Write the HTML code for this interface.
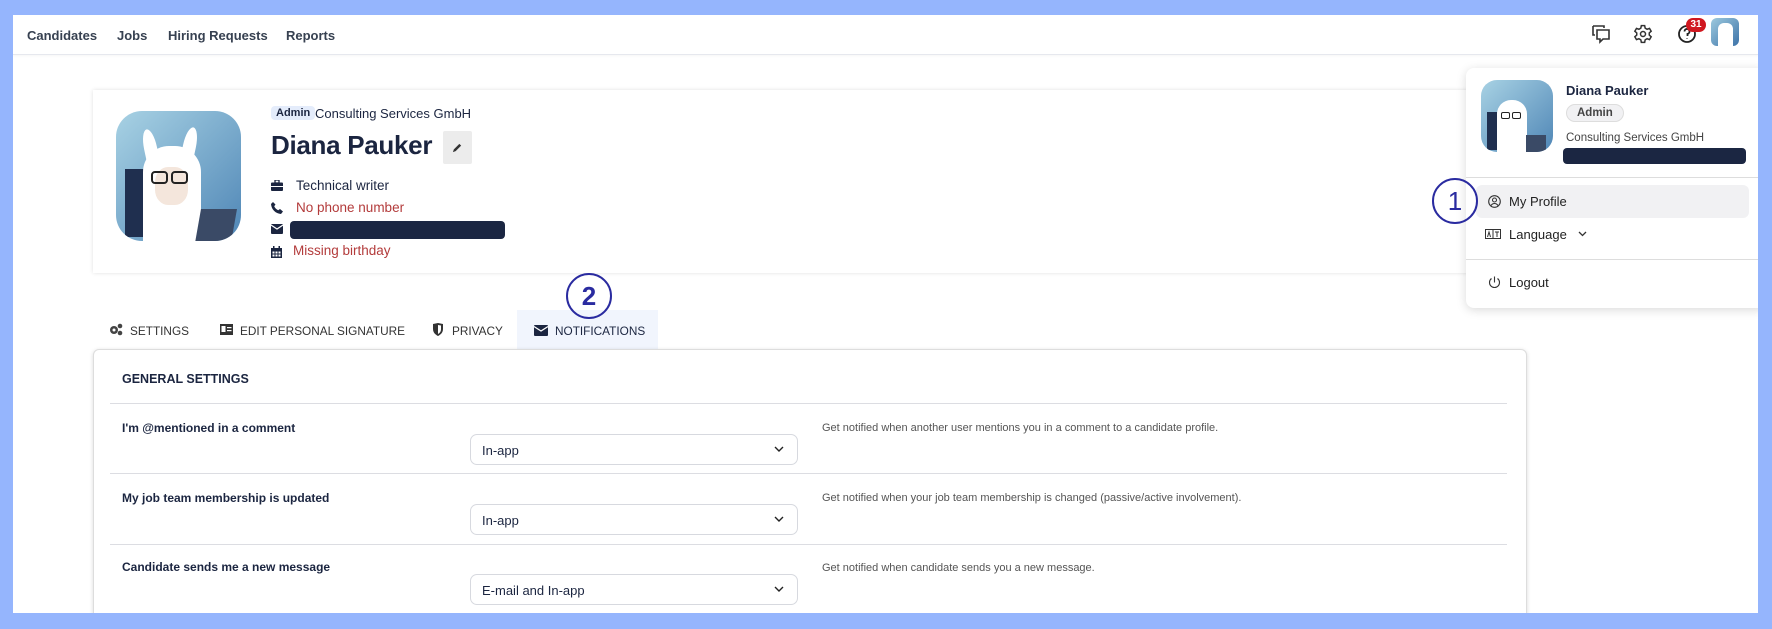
<!DOCTYPE html>
<html><head><meta charset="utf-8"><style>
*{box-sizing:border-box;margin:0;padding:0}
body{width:1772px;height:629px;background:#95b5fd;font-family:"Liberation Sans",sans-serif;position:relative;overflow:hidden;color:#1b2540}
.abs{position:absolute}
#page{position:absolute;left:13px;top:15px;width:1745px;height:598px;background:#fff;overflow:hidden}
.nav{position:absolute;left:0;top:0;width:100%;height:40px;border-bottom:1px solid #e6e8ee;box-shadow:0 1px 2px rgba(0,0,0,.04)}
.nav span{position:absolute;top:13px;font-size:13px;font-weight:bold;color:#374151}
.card{position:absolute;background:#fff;box-shadow:0 0 4px rgba(0,0,0,.12)}
.t{position:absolute;white-space:nowrap}
.row{position:absolute;font-size:13.5px}
.sel{position:absolute;left:457px;width:328px;height:31px;border:1px solid #d7d9df;border-radius:7px;font-size:13px;padding:8px 0 0 11px;color:#1b2540}
.sel svg{position:absolute;right:13px;top:11px}
.div{position:absolute;left:97px;width:1397px;height:1px;background:#dcdde2}
.lbl{position:absolute;left:109px;font-size:12px;font-weight:bold}
.desc{position:absolute;left:809px;font-size:11px;color:#555}
.circ{position:absolute;width:46px;height:46px;border:2px solid #2a2ba0;border-radius:50%;color:#2a2ba0;font-size:26px;text-align:center;line-height:42px;font-weight:bold}
.tab{position:absolute;top:309px;font-size:11.8px;color:#333;white-space:nowrap}
</style></head><body>
<div id="page">
<div class="nav">
<span style="left:14px">Candidates</span><span style="left:104px">Jobs</span><span style="left:155px">Hiring Requests</span><span style="left:273px">Reports</span>
<svg class="abs" style="left:1578px;top:9px" width="20" height="20" viewBox="0 0 20 20" fill="none" stroke="#333" stroke-width="1.6"><path d="M2 2h11v2M2 2v9h2"/><path d="M6 6h12v9h-6l-3 3v-3H6z"/></svg>
<svg class="abs" style="left:1620px;top:9px" width="20" height="20" viewBox="0 0 24 24" fill="none" stroke="#333" stroke-width="1.8"><circle cx="12" cy="12" r="3"/><path d="M10 2h4l.6 3 2.3 1.3 2.9-1 2 3.4-2.3 2v2.6l2.3 2-2 3.4-2.9-1-2.3 1.3L14 22h-4l-.6-3-2.3-1.3-2.9 1-2-3.4 2.3-2v-2.6l-2.3-2 2-3.4 2.9 1L9.4 5z"/></svg>
<svg class="abs" style="left:1664px;top:9px" width="20" height="20" viewBox="0 0 20 20" fill="none" stroke="#222" stroke-width="1.8"><circle cx="10" cy="10" r="8"/><path d="M7.5 7.5a2.5 2.5 0 1 1 3 2.4V12M10 14.5v.5"/></svg>
<div class="abs" style="left:1673px;top:3px;width:20px;height:14px;border-radius:7px;background:#d0171f;color:#fff;font-size:10px;font-weight:bold;text-align:center;line-height:14px">31</div>
<div class="abs" style="left:1698px;top:3px;width:28px;height:28px;border-radius:6px;background:linear-gradient(135deg,#9cc9de,#3d73a8);overflow:hidden"><div class="abs" style="left:7px;top:5px;width:15px;height:23px;background:#fff;border-radius:6px 6px 0 0"></div></div>
</div>

<div class="card" style="left:80px;top:75px;width:1380px;height:183px">
<div class="abs" style="left:23px;top:21px;width:125px;height:130px;border-radius:26px;background:linear-gradient(135deg,#a8d2e4,#4f86b6);overflow:hidden">
<div class="abs" style="left:9px;top:58px;width:20px;height:68px;background:#1f2f4f"></div>
<div class="abs" style="left:28px;top:18px;width:13px;height:38px;background:#fff;border-radius:50% 50% 0 0;transform:rotate(-12deg)"></div>
<div class="abs" style="left:67px;top:16px;width:13px;height:38px;background:#fff;border-radius:50% 50% 0 0;transform:rotate(12deg)"></div>
<div class="abs" style="left:27px;top:35px;width:58px;height:100px;background:#fff;border-radius:26px 26px 0 0"></div>
<div class="abs" style="left:39px;top:56px;width:33px;height:38px;background:#f4e6dc;border-radius:40%"></div>
<div class="abs" style="left:35px;top:60px;width:17px;height:13px;border:2px solid #222;border-radius:4px"></div>
<div class="abs" style="left:55px;top:60px;width:17px;height:13px;border:2px solid #222;border-radius:4px"></div>
<div class="abs" style="left:82px;top:98px;width:36px;height:34px;background:#3a4a66;transform:skewX(-10deg)"></div>
</div>
<div class="t" style="left:178px;top:16px;background:#e4ecfb;border-radius:4px;padding:1px 5px;font-size:11px;font-weight:bold">Admin</div>
<div class="t" style="left:222px;top:16px;font-size:13px">Consulting Services GmbH</div>
<div class="t" style="left:178px;top:40px;font-size:26px;font-weight:bold;letter-spacing:-.3px">Diana Pauker</div>
<div class="abs" style="left:350px;top:41px;width:29px;height:33px;background:#ececec;border-radius:2px"><svg class="abs" style="left:9px;top:11px" width="11" height="11" viewBox="0 0 12 12"><path d="M1 11l1-3 6-6 2 2-6 6z" fill="#333"/></svg></div>
<svg class="abs" style="left:178px;top:90px" width="12" height="11" viewBox="0 0 12 11"><rect x="0" y="2.5" width="12" height="8.5" rx="1" fill="#1b2540"/><rect x="4" y="0" width="4" height="3" fill="none" stroke="#1b2540" stroke-width="1.3"/><rect x="0" y="6" width="12" height="1" fill="#fff"/></svg>
<div class="row t" style="left:203px;top:88px">Technical writer</div>
<svg class="abs" style="left:178px;top:112px" width="12" height="12" viewBox="0 0 12 12"><path d="M2 0l2.5 2.5-1.3 1.8c.8 1.8 2.2 3.2 4 4l1.8-1.3L12 9.5 10 12C4.5 11.5.5 7.5 0 2z" fill="#1b2540"/></svg>
<div class="row t" style="left:203px;top:110px;color:#b33b3b">No phone number</div>
<svg class="abs" style="left:178px;top:134px" width="12" height="10" viewBox="0 0 12 10"><rect width="12" height="10" rx="1" fill="#1b2540"/><path d="M0 1l6 4 6-4" stroke="#fff" stroke-width="1.2" fill="none"/></svg>
<div class="abs" style="left:197px;top:131px;width:215px;height:18px;border-radius:4px;background:#1b2642"></div>
<svg class="abs" style="left:178px;top:156px" width="11" height="12" viewBox="0 0 11 12"><rect y="2" width="11" height="10" fill="#1b2540"/><rect x="2" y="0" width="1.5" height="3" fill="#1b2540"/><rect x="7.5" y="0" width="1.5" height="3" fill="#1b2540"/><g fill="#fff"><rect x="1.5" y="5.5" width="2" height="2"/><rect x="4.5" y="5.5" width="2" height="2"/><rect x="7.5" y="5.5" width="2" height="2"/><rect x="1.5" y="8.5" width="2" height="2"/><rect x="4.5" y="8.5" width="2" height="2"/><rect x="7.5" y="8.5" width="2" height="2"/></g></svg>
<div class="row t" style="left:200px;top:153px;color:#b33b3b">Missing birthday</div>
</div>

<div class="abs" style="left:504px;top:295px;width:141px;height:39px;background:#f1f5fd"></div>
<svg class="abs" style="left:96px;top:308px" width="14" height="13" viewBox="0 0 14 13" fill="#444"><circle cx="5" cy="7" r="4"/><circle cx="11" cy="3" r="2.3"/><circle cx="11" cy="10" r="2.3"/><circle cx="5" cy="7" r="1.5" fill="#fff"/></svg>
<div class="tab" style="left:117px">SETTINGS</div>
<svg class="abs" style="left:207px;top:309px" width="13" height="11" viewBox="0 0 13 11"><rect width="13" height="11" fill="#333"/><rect x="1.5" y="2" width="4" height="6" fill="#fff"/><rect x="7" y="3" width="4.5" height="1.2" fill="#fff"/><rect x="7" y="6" width="4.5" height="1.2" fill="#fff"/></svg>
<div class="tab" style="left:227px">EDIT PERSONAL SIGNATURE</div>
<svg class="abs" style="left:420px;top:308px" width="10" height="13" viewBox="0 0 10 13"><path d="M0 1l5-1 5 1v5c0 4-3 6-5 7-2-1-5-3-5-7z" fill="#333"/><path d="M5 2v9c1.5-1 3-2 3-5V2.5z" fill="#fff"/></svg>
<div class="tab" style="left:439px">PRIVACY</div>
<svg class="abs" style="left:521px;top:310px" width="14" height="11" viewBox="0 0 14 11"><rect width="14" height="11" rx="1" fill="#1b2540"/><path d="M0 1.5l7 4.5 7-4.5" stroke="#fff" stroke-width="1.3" fill="none"/></svg>
<div class="tab" style="left:542px;color:#1b2540">NOTIFICATIONS</div>

<div class="card" style="left:80px;top:334px;width:1434px;height:300px;border-radius:6px;border:1px solid #ddd;box-shadow:0 1px 4px rgba(0,0,0,.15)"></div>
<div class="t" style="left:109px;top:357px;font-size:12.5px;font-weight:bold">GENERAL SETTINGS</div>
<div class="div" style="top:388px"></div>
<div class="div" style="top:458px"></div>
<div class="div" style="top:529px"></div>
<div class="div" style="top:598px"></div>
<div class="lbl" style="top:406px">I'm @mentioned in a comment</div>
<div class="lbl" style="top:476px">My job team membership is updated</div>
<div class="lbl" style="top:545px">Candidate sends me a new message</div>
<div class="sel" style="top:419px">In-app<svg width="10" height="7" viewBox="0 0 10 7"><path d="M1 1l4 4 4-4" stroke="#222" stroke-width="1.4" fill="none"/></svg></div>
<div class="sel" style="top:489px">In-app<svg width="10" height="7" viewBox="0 0 10 7"><path d="M1 1l4 4 4-4" stroke="#222" stroke-width="1.4" fill="none"/></svg></div>
<div class="sel" style="top:559px">E-mail and In-app<svg width="10" height="7" viewBox="0 0 10 7"><path d="M1 1l4 4 4-4" stroke="#222" stroke-width="1.4" fill="none"/></svg></div>
<div class="desc" style="top:407px">Get notified when another user mentions you in a comment to a candidate profile.</div>
<div class="desc" style="top:477px">Get notified when your job team membership is changed (passive/active involvement).</div>
<div class="desc" style="top:547px">Get notified when candidate sends you a new message.</div>

<div class="circ" style="left:553px;top:258px">2</div>

<div class="card" style="left:1453px;top:53px;width:300px;height:240px;border-radius:8px;box-shadow:0 2px 10px rgba(0,0,0,.15)">
<div class="abs" style="left:15px;top:12px;width:72px;height:72px;border-radius:16px;background:linear-gradient(135deg,#a8d2e4,#4f86b6);overflow:hidden">
<div class="abs" style="left:6px;top:32px;width:10px;height:38px;background:#1f2f4f"></div>
<div class="abs" style="left:16px;top:20px;width:30px;height:55px;background:#fff;border-radius:14px 14px 0 0"></div>
<div class="abs" style="left:20px;top:32px;width:9px;height:7px;border:1.5px solid #222;border-radius:2px"></div>
<div class="abs" style="left:31px;top:32px;width:9px;height:7px;border:1.5px solid #222;border-radius:2px"></div>
<div class="abs" style="left:45px;top:55px;width:20px;height:17px;background:#3a4a66"></div>
</div>
<div class="t" style="left:100px;top:15px;font-size:13px;font-weight:bold">Diana Pauker</div>
<div class="t" style="left:100px;top:36px;padding:2px 10px;border:1px solid #ddd;background:#f1f1f3;border-radius:10px;font-size:11.5px;font-weight:bold;color:#444">Admin</div>
<div class="t" style="left:100px;top:64px;font-size:11.5px;color:#444">Consulting Services GmbH</div>
<div class="abs" style="left:97px;top:80px;width:183px;height:16px;border-radius:4px;background:#1b2642"></div>
<div class="abs" style="left:0;top:109px;width:300px;height:1px;background:#ddd"></div>
<div class="abs" style="left:10px;top:117px;width:273px;height:33px;border-radius:6px;background:#f1f1f3"></div>
<svg class="abs" style="left:22px;top:127px" width="13" height="13" viewBox="0 0 13 13" fill="none" stroke="#333" stroke-width="1.1"><circle cx="6.5" cy="6.5" r="5.8"/><circle cx="6.5" cy="5" r="2"/><path d="M3 10.5c1-1.5 2-2 3.5-2s2.5.5 3.5 2"/></svg>
<div class="t" style="left:43px;top:126px;font-size:13px;color:#222">My Profile</div>
<svg class="abs" style="left:19px;top:161px" width="16" height="10" viewBox="0 0 16 10" fill="none" stroke="#333" stroke-width="1"><rect x=".5" y=".5" width="15" height="9"/><path d="M8 .5v9M2.5 8l1.5-5 1.5 5M10 3h4M12 3v5"/></svg>
<div class="t" style="left:43px;top:159px;font-size:13px;color:#222">Language</div>
<svg class="abs" style="left:112px;top:163px" width="9" height="6" viewBox="0 0 9 6"><path d="M1 1l3.5 3.5L8 1" stroke="#333" stroke-width="1.3" fill="none"/></svg>
<div class="abs" style="left:0;top:191px;width:300px;height:1px;background:#ddd"></div>
<svg class="abs" style="left:22px;top:208px" width="13" height="13" viewBox="0 0 13 13" fill="none" stroke="#333" stroke-width="1.1"><path d="M6.5 .5v6M3.5 2.5a5 5 0 1 0 6 0"/></svg>
<div class="t" style="left:43px;top:207px;font-size:13px;color:#222">Logout</div>
</div>
<div class="circ" style="left:1419px;top:163px;font-weight:normal">1</div>
</div>
</body></html>
